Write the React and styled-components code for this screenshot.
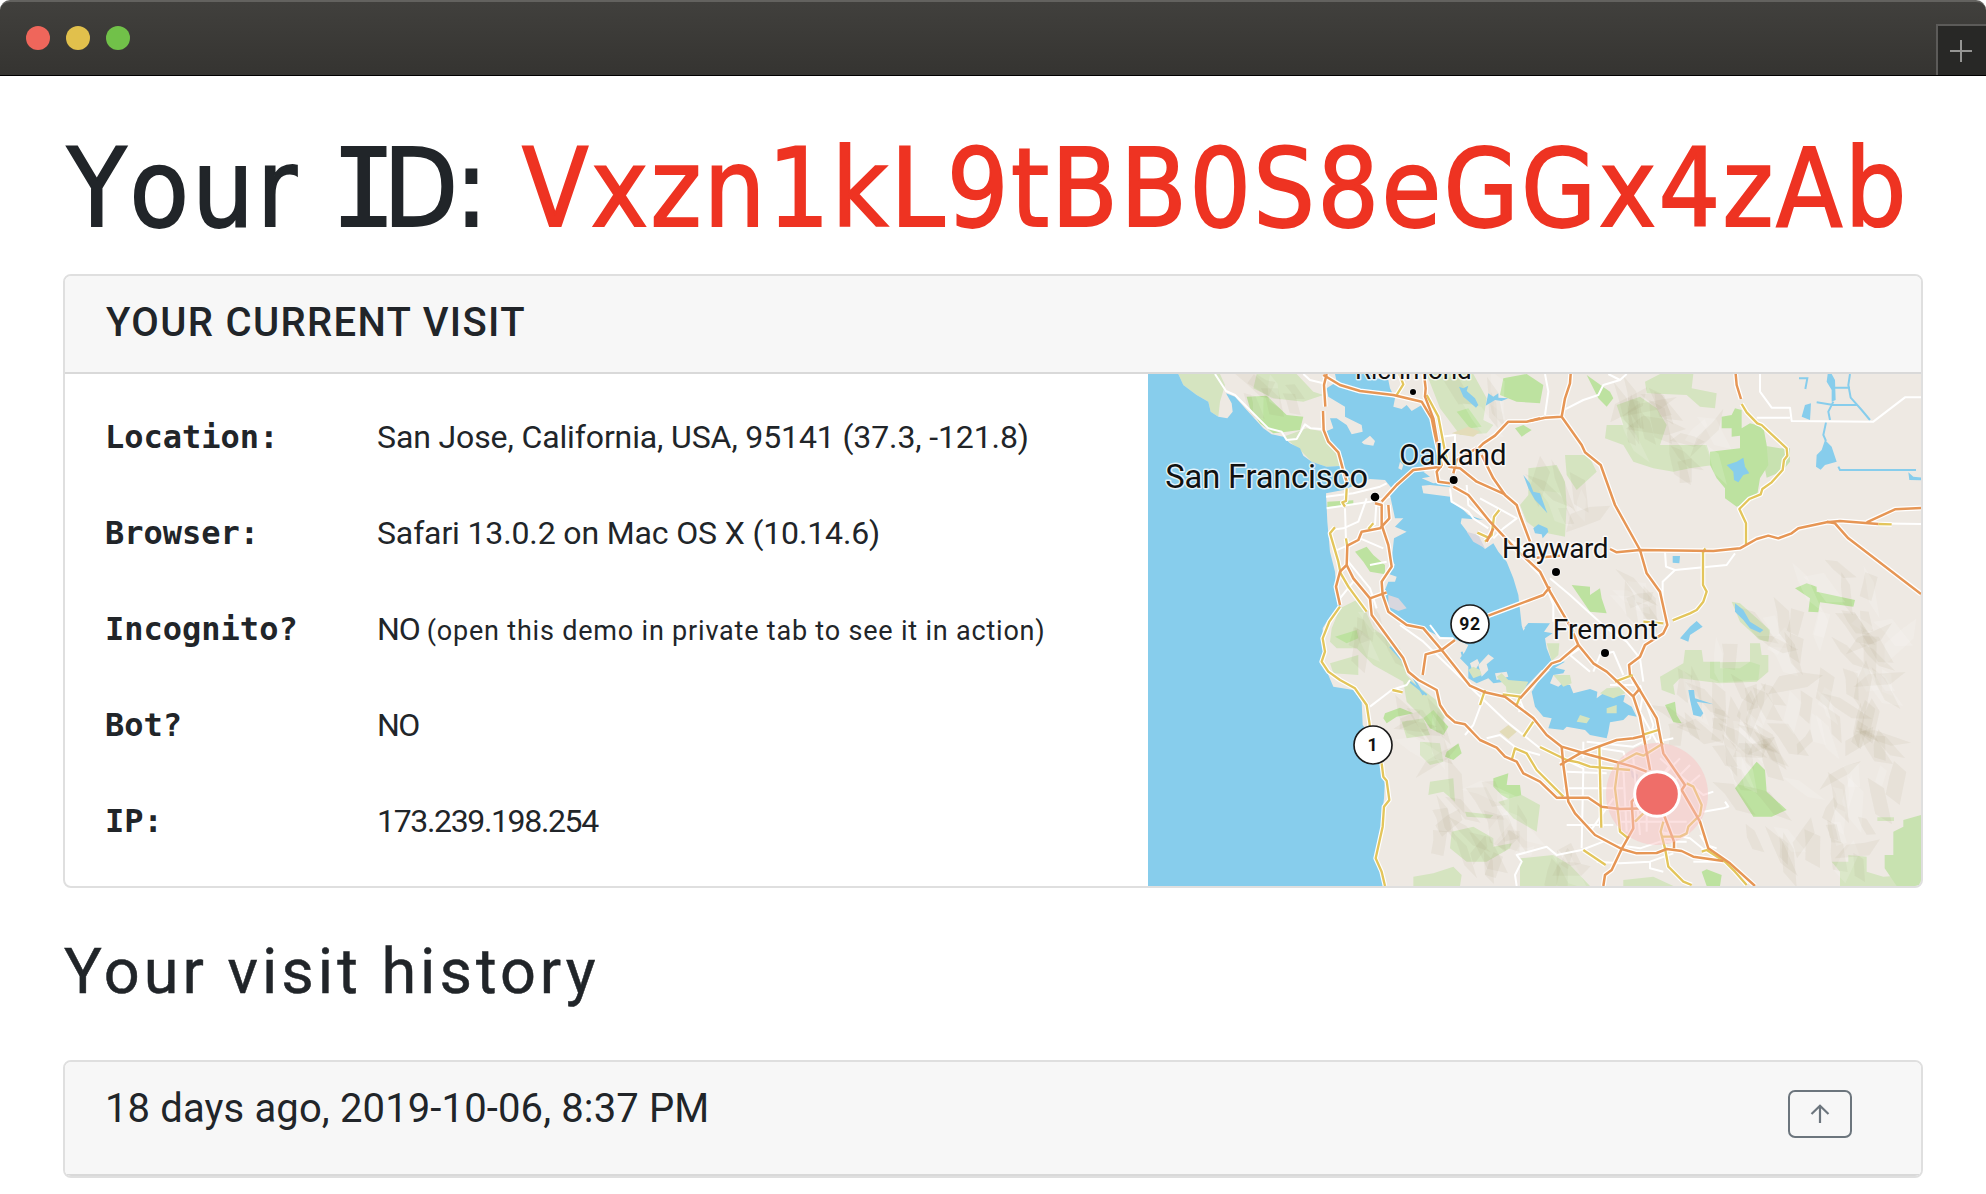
import React from "react";
import styled, { createGlobalStyle } from "styled-components";

const GlobalStyle = createGlobalStyle`
  * { box-sizing: border-box; }
  body {
    margin: 0;
    background: #fff;
    color: #212529;
    font-family: Roboto, "Noto Sans", sans-serif;
  }
`;

const Window = styled.div`
  width: 1986px;
  height: 1194px;
  overflow: hidden;
  background: #fff;
`;

const TitleBar = styled.header`
  display: flex;
  align-items: center;
  justify-content: space-between;
  height: 76px;
  padding-left: 26px;
  border-top: 2px solid #63625f;
  border-bottom: 1px solid #000;
  border-radius: 10px 10px 0 0;
  background: linear-gradient(#41403d, #353431);
  overflow: hidden;
`;

const Lights = styled.div`
  display: flex;
  gap: 16px;
  padding-bottom: 1px;
`;

const Light = styled.span`
  width: 24px;
  height: 24px;
  border-radius: 50%;
  background: ${(p) => p.$color};
`;

const NewTab = styled.button`
  display: flex;
  align-items: center;
  justify-content: center;
  align-self: flex-end;
  width: 50px;
  height: 51px;
  padding: 0 2px 0 0;
  border: solid #5c5b59;
  border-width: 2px 0 0 2px;
  background: #282826;
`;

const Page = styled.main`
  padding: 46px 63px 0;
`;

const Title = styled.h1`
  margin: 0 0 20px;
  height: 132px;
  line-height: 134px;
  font-family: "DejaVu Sans Condensed", "DejaVu Sans", sans-serif;
  font-stretch: condensed;
  font-size: 108px;
  font-weight: 400;
  font-kerning: none;
  white-space: nowrap;
  display: flex;
  -webkit-text-stroke: 1.8px currentColor;
`;

const TitleLabel = styled.span`
  width: 459px;
  padding-left: 4px;
  letter-spacing: 3.2px;
`;

const SlabCapital = styled.span`
  font-family: "DejaVu Sans Mono", monospace;
  letter-spacing: -13px;
  margin-left: -3px;
`;

const TightCapital = styled.span`
  letter-spacing: -3px;
`;

const VisitorId = styled.span`
  color: #ee3322;
  letter-spacing: 2.3px;
`;

const Card = styled.section`
  border: 2px solid #dfdfdf;
  border-radius: 8px;
  background: #fff;
  overflow: hidden;
`;

const CardHeader = styled.div`
  display: flex;
  justify-content: space-between;
  height: ${(p) => p.$height}px;
  padding: 0 69px 0 41px;
  border-bottom: 2px solid #d9d9d9;
  background: #f7f7f7;
`;

const CardTitle = styled.h2`
  margin: 0;
  line-height: 93px;
  font-size: 40px;
  font-weight: 500;
  letter-spacing: 1.35px;
`;

const CardBody = styled.div`
  display: flex;
  height: 512px;
`;

const Details = styled.dl`
  flex: 1;
  margin: 0;
  padding: 15px 0 0 40px;
`;

const Row = styled.div`
  display: flex;
  height: 96px;
  line-height: 96px;
  font-size: 32px;
  white-space: nowrap;
`;

const Label = styled.dt`
  width: 272px;
  font-family: "DejaVu Sans Mono", monospace;
  font-weight: 700;
`;

const Value = styled.dd`
  margin: 0;
  letter-spacing: ${(p) => p.$spacing || 0}px;
`;

const Note = styled.small`
  font-size: 27px;
  letter-spacing: 0.8px;
`;

const MapFrame = styled.div`
  width: 773px;
  height: 512px;

  svg {
    display: block;
  }
`;

const HistoryTitle = styled.h2`
  margin: 44px 0 48px;
  height: 80px;
  line-height: 80px;
  padding-left: 1px;
  font-size: 63px;
  font-weight: 400;
  letter-spacing: 4px;
  -webkit-text-stroke: 0.5px currentColor;
`;

const VisitTime = styled.span`
  margin-left: -1px;
  line-height: 94px;
  font-size: 40px;
  letter-spacing: 0.13px;
`;

const CollapseButton = styled.button`
  display: flex;
  align-items: center;
  justify-content: center;
  width: 64px;
  height: 48px;
  margin-top: 28px;
  padding: 0;
  border: 2px solid #6c757d;
  border-radius: 7px;
  background: transparent;
`;

const VISIT = [
  { label: "Location:", value: "San Jose, California, USA, 95141 (37.3, -121.8)", spacing: -0.12 },
  { label: "Browser:", value: "Safari 13.0.2 on Mac OS X (10.14.6)", spacing: -0.14 },
  { label: "Incognito?", value: "NO", note: "(open this demo in private tab to see it in action)", spacing: -1 },
  { label: "Bot?", value: "NO", spacing: -1.5 },
  { label: "IP:", value: "173.239.198.254", spacing: -1.35 },
];

/* ---- map geometry, three units to a pixel ---- */

const WATER =
  "M24 27L115 27 130 60 170 90 205 110 212 140 235 155 262 160 278 140 275 115 258 85 285 95 320 135 370 190 395 208 430 215 450 235 480 250 490 272 515 290 560 305 612 302 610 285 600 262 575 235 555 200 580 190 570 160 590 160 620 180 635 208 668 200 665 180 615 155 615 125 590 110 565 95 560 70 590 50 585 27 690 27 705 40 745 45 750 70 765 100 760 125 785 132 800 120 815 138 845 120 860 130 880 165 890 200 890 240 900 270 905 300 850 320 870 335 845 340 880 355 925 352 930 366 870 360 845 362 850 385 890 390 930 395 932 412 960 425 985 450 1030 465 965 460 962 475 985 505 1015 530 1035 552 1060 535 1075 560 1100 590 1120 640 1135 690 1145 780 1150 792 1165 774 1230 775 1212 800 1238 805 1215 820 1220 850 1235 888 1275 890 1245 908 1275 915 1270 925 1240 930 1230 955 1255 965 1265 957 1290 960 1300 985 1350 972 1372 980 1370 1000 1390 985 1420 975 1415 992 1455 990 1450 1010 1475 1025 1490 1055 1465 1050 1450 1065 1410 1072 1405 1100 1400 1120 1350 1110 1335 1095 1280 1085 1270 1095 1225 1090 1235 1060 1210 1055 1185 1025 1175 980 1195 950 1230 915 1205 915 1155 968 1115 965 1095 950 1060 955 1045 940 1010 955 985 940 985 905 960 880 975 860 985 840 940 820 900 815 870 800 800 775 770 760 745 735 725 700 745 650 765 650 770 635 740 625 765 600 755 585 762 520 800 500 765 485 790 460 765 460 750 390 755 370 735 345 690 342 610 375 558 385 562 470 570 560 585 620 590 680 600 725 560 770 548 790 550 860 543 890 565 930 580 965 640 975 665 1010 668 1080 690 1110 720 1200 735 1240 732 1300 725 1360 720 1420 705 1480 720 1520 730 1563 24 1563Z";

const LAKES = [
  "957 65L970 70 985 62 980 78 1005 100 1015 120 1008 128 985 108 970 95Z",
  "1037 122L1045 85 1060 95 1075 85 1075 98 1105 100 1085 108 1065 105Z",
  "1150 330L1170 355 1180 380 1200 385 1222 445 1200 420 1185 405 1165 370Z",
  "1180 490L1195 478 1222 490 1225 500 1208 520 1205 508 1185 505Z",
  "590 300L620 290 640 278 645 305 658 325 640 330 625 352 612 345 610 320Z",
  "885 225L905 245 920 290 885 300 872 314 858 305 860 270 875 255Z",
  "893 27L905 27 915 45 917 105 905 110 905 75 890 50Z",
  "815 155L825 120 843 115 840 165Z",
  "428 573L450 573 448 595 428 593Z",
  "615 715L640 735 660 770 700 795 690 803 660 790 640 765 615 740Z",
  "450 820L480 785 500 768 518 785 480 810 475 830Z",
  "475 975L492 975 495 1000 550 1018 500 1010 520 1045 512 1055 490 1050 480 1005Z",
  "1135 322L1150 335 1175 338 1173 346 1138 345Z",
];
const LAKE_EAST = [false, false, false, false, true, true, true, true, true, true, true, true, true];

const CREEKS = [
  "M1977 40H2002L1996 72M2130 27L2125 60 2132 98 2165 135 2190 165M2075 68H2130M2030 112L2080 120H2150M2080 110L2065 140 2070 165M2058 172L2050 210 2058 228M2095 305L2100 315H2328",
  "M750 845L790 890 815 930 850 990M810 950L860 990M970 880L965 860",
];

const SHOALS = [
  "990 895L1012 882 1018 895 1000 925Z",
  "1015 900L1045 868 1062 880 1040 898 1045 915 1025 935Z",
  "1065 925L1100 920 1105 935 1070 945Z",
];

const MARSH = [
  "985 915L1000 905 1020 915 1025 930 1000 940Z",
  "1070 935L1085 925 1105 945 1165 950 1150 980 1125 1000 1100 985 1098 965Z",
  "1220 835L1258 835 1255 870 1235 888Z",
  "1240 930L1290 930 1295 955 1270 965Z",
  "1400 1030L1430 1020 1430 1045 1400 1045Z",
  "1320 1050L1350 1060 1340 1075 1310 1070Z",
  "1380 985L1400 970 1450 965 1455 985 1420 1000Z",
];

const PARKS = [
  { c: 0, d: "115 27L240 27 255 60 240 110 235 155 212 140 205 110 170 90 130 60Z" },
  { c: 0, d: "350 27L470 27 520 80 550 90 490 110 400 100 340 70Z" },
  { c: 1, d: "320 95L380 92 440 150 490 155 480 195 440 200 400 205 360 175 330 130Z" },
  { c: 0, d: "430 215L500 190 550 200 580 235 605 265 612 302 560 305 515 290 480 255Z" },
  { c: 0, d: "860 27L1000 27 1040 100 1030 165 1060 180 1040 205 960 210 900 130Z" },
  { c: 1, d: "950 140L985 130 1025 185 990 190Z" },
  { c: 1, d: "1090 40L1160 27 1210 60 1200 115 1130 110 1080 90Z" },
  { c: 1, d: "1125 190L1150 180 1175 195 1145 215Z" },
  { c: 2, d: "935 205L985 185 1020 200 1000 215Z" },
  { c: 1, d: "562 410L640 406 640 420 562 426Z" },
  { c: 1, d: "645 560L680 545 700 570 735 600 735 628 690 620 670 590Z" },
  { c: 0, d: "600 730L660 700 700 790 780 850 800 930 830 960 895 1010 920 1050 890 1090 850 1060 800 1010 790 950 700 900 650 850 590 850 570 830 575 790Z" },
  { c: 1, d: "585 815L650 795 655 820 620 835Z" },
  { c: 0, d: "570 895L655 870 655 930 580 925Z" },
  { c: 1, d: "735 1045L780 1028 820 1045 770 1055 740 1075 730 1060Z" },
  { c: 1, d: "850 1060L880 1035 925 1085 910 1110 870 1090Z" },
  { c: 0, d: "785 1070L850 1060 870 1110 800 1120Z" },
  { c: 0, d: "840 1130L900 1135 910 1190 870 1200 840 1170Z" },
  { c: 1, d: "920 1160L955 1135 965 1165 940 1185 915 1175Z" },
  { c: 0, d: "870 1250L940 1240 945 1310 910 1280 865 1290Z" },
  { c: 1, d: "1060 1240L1105 1225 1100 1260 1140 1260 1145 1300 1120 1310 1085 1290 1060 1265Z" },
  { c: 0, d: "1075 1310L1145 1290 1200 1320 1190 1400 1120 1360Z" },
  { c: 0, d: "935 1400L1000 1385 1060 1420 1060 1445 1115 1435 1110 1450 1040 1490 980 1490 930 1450Z" },
  { c: 0, d: "820 1535L880 1525 940 1505 965 1530 960 1563 820 1563Z" },
  { c: 0, d: "1140 1480L1240 1470 1290 1500 1350 1563 1140 1563Z" },
  { c: 0, d: "975 1340L1060 1350 1050 1360 980 1355Z" },
  { c: 0, d: "1165 310L1250 300 1275 350 1280 420 1275 515 1200 500 1160 470 1140 420 1165 390Z" },
  { c: 0, d: "1275 270L1345 270 1370 320 1310 375 1280 330Z" },
  { c: 1, d: "1340 30L1410 80 1420 100 1400 125 1375 100Z" },
  { c: 0, d: "1515 50L1560 27 1660 27 1655 70 1730 85 1725 130 1680 125 1640 90 1520 85Z" },
  { c: 0, d: "1430 120L1500 95 1550 130 1580 180 1560 240 1700 240 1720 300 1650 310 1600 320 1540 310 1480 290 1450 240 1395 220 1400 180 1450 180Z" },
  { c: 3, d: "1860 240L1920 250 1950 250 1950 290 1925 320 1880 338Z" },
  { c: 1, d: "1745 155L1775 150 1785 130 1805 135 1805 190 1830 175 1870 185 1880 240 1885 300 1860 340 1850 400 1790 425 1755 400 1755 370 1730 340 1710 300 1710 260 1800 250 1800 212 1775 215 1775 190 1745 190Z" },
  { c: 1, d: "1295 660L1350 665 1350 690 1380 670 1385 700 1400 745 1350 740Z" },
  { c: 1, d: "1965 670L2000 655 2030 665 2030 680 2145 705 2140 725 2040 712 2035 742 2005 740 2010 700Z" },
  { c: 0, d: "1775 710L1800 715 1890 795 1885 830 1860 825 1800 770Z" },
  { c: 0, d: "1560 935L1630 895 1635 855 1685 855 1690 890 1710 890 1710 918 1740 915 1740 892 1830 890 1830 835 1860 835 1865 870 1885 870 1885 920 1850 950 1740 955 1620 940 1600 960 1605 990 1565 975Z" },
  { c: 3, d: "1710 890L1740 890 1740 910 1800 910 1830 890 1860 900 1855 945 1740 952 1710 940Z" },
  { c: 1, d: "1575 1020L1605 1010 1610 1050 1625 1075 1600 1072Z" },
  { c: 1, d: "1785 1270L1850 1190 1875 1215 1880 1280 1940 1335 1895 1355 1840 1355Z" },
  { c: 1, d: "1685 1520L1700 1513 1745 1530 1740 1563 1700 1563Z" },
  { c: 0, d: "2075 1490L2125 1490 2125 1470 2180 1475 2180 1520 2230 1535 2300 1530 2300 1563 2100 1563 2100 1520Z" },
  { c: 3, d: "2234 1470L2260 1470 2260 1400 2290 1385 2290 1365 2343 1350 2343 1563 2270 1563 2234 1510Z" },
  { c: 0, d: "2212 1357H2262V1368H2212Z" },
  { c: 0, d: "1450 1545L1540 1535 1600 1563 1450 1563Z" },
];
const PARK_FILL = ["#d5e4c0", "#bde2a0", "#e3dcb9", "#c8e2b0"];

const MINOR = [
  "225 27 258 78 285 90 385 190 425 200 440 225 470 222 495 178 512 190 545 192",
  "490 27 510 45 550 55",
  "558 395 640 385 720 365 740 355",
  "560 430 690 410 750 395",
  "615 430 618 530",
  "680 400 655 470 610 490 570 495",
  "710 400 705 480",
  "580 560 615 545 660 520 730 550",
  "625 590 690 670 710 730",
  "640 650 600 700",
  "690 600 740 590",
  "905 215 945 210 945 240",
  "980 360 985 420 1060 480 1100 520 1170 560",
  "930 370 935 410 985 440 1000 460 1045 490",
  "1020 400 1130 460 1090 490 1060 520",
  "1230 640 1290 690 1350 745 1400 790",
  "1170 600 1210 640 1240 720 1240 770",
  "1215 27 1225 80 1215 150",
  "1275 133 1330 105 1375 90 1390 60 1440 45 1460 27",
  "1405 27 1440 45",
  "1860 27 1860 80 1895 128 1950 128 1955 168 2200 170 2295 97 2343 97",
  "1850 158 1950 158",
  "2190 475 2343 477",
  "1575 560 1578 605 1605 615 1760 600 1785 565",
  "1605 615 1568 650 1568 700",
  "780 780 850 830 1010 985 1100 1070 1200 1150",
  "690 1025 755 975 800 960 810 945",
  "1030 1000 1000 1080 975 1110",
  "1040 1120 1080 1110 1130 1150 1200 1170",
  "870 780 900 820 940 820",
  "1140 1005 1150 1030 1135 1040",
  "1320 850 1290 870 1350 920",
  "1400 790 1460 830 1500 880 1510 950",
  "1360 920 1380 870 1420 860 1450 930",
  "1470 920 1480 960 1410 960",
  "1500 960 1540 1080 1530 1120 1480 1145 1340 1130",
  "1510 980 1500 1040 1550 1130 1600 1120",
  "1200 1150 1330 1210 1325 1450",
  "1270 1270 1450 1270",
  "1280 1220 1400 1225",
  "1330 1130 1330 1180",
  "1280 1380 1420 1380",
  "1380 1150 1450 1160 1460 1190",
  "1420 1300 1350 1400",
  "1450 1210 1460 1400",
  "1480 1180 1500 1410",
  "1520 1400 1520 1260",
  "1430 1330 1600 1330",
  "1440 1370 1640 1370",
  "1560 1180 1690 1290 1720 1280",
  "1590 1200 1560 1240",
  "1620 1180 1570 1230",
  "1650 1200 1600 1250",
  "1680 1230 1620 1280",
  "1690 1340 1750 1330 1765 1325 1755 1310",
  "1560 1400 1650 1420 1700 1460",
  "1430 1440 1500 1450 1560 1430 1640 1430",
  "1370 1490 1440 1495 1530 1490 1600 1465",
  "1530 1490 1530 1510 1570 1520",
  "1680 1410 1700 1440 1730 1450",
  "1130 1563 1125 1530 1145 1490 1130 1470 1220 1445 1250 1470 1325 1455 1390 1430",
  "1660 1490 1750 1490",
];

const ORANGE = [
  "560 27 552 60 556 125",
  "549 138 551 195 565 230 595 262 608 310 620 350",
  "550 30 600 60 660 78 760 90 845 110 875 160 885 210 905 300 890 320 895 350 930 355",
  "852 27 857 70 855 95 880 160 892 230",
  "1200 160 1160 170 1105 170 1065 212 1030 235 1015 250",
  "1215 158 1265 155 1275 100 1290 55 1292 27",
  "1170 168 1215 158",
  "1265 155 1325 240 1335 262 1382 300 1425 420 1500 555 1520 625 1560 680 1582 780 1570 805 1515 840 1500 875 1467 900 1470 930",
  "725 410 770 360 820 315 905 305",
  "925 305 960 310 1010 350 1095 388",
  "1025 270 1060 340 1095 390 1130 420 1140 450 1170 530",
  "940 365 985 390 1050 470 1130 555 1200 620 1230 680 1300 800",
  "940 325 950 285 1010 250",
  "1040 530 1060 490",
  "705 415 725 420 725 480 745 540 755 605 725 650 728 690 745 740 800 780 850 790 905 855 990 962 1035 982 1095 995 1180 1060 1220 1110 1265 1145 1350 1170 1480 1205 1520 1220",
  "745 420 748 460 720 490 665 500 655 525 622 542 620 600 600 620 588 665 600 720",
  "620 600 640 640 690 700 695 750 735 805 790 880 805 920 835 945 890 975 900 1020 920 1050 945 1072 975 1078 1020 1125 1070 1148 1095 1175 1130 1190 1150 1225 1200 1250 1250 1298 1345 1298 1385 1325 1440 1332 1520 1330",
  "690 700 740 682",
  "1045 752 1170 705 1210 690 1230 665",
  "945 825 905 855 857 868 848 930",
  "1140 1000 1235 895 1260 887 1315 840 1360 895 1400 920 1480 995 1500 1055 1530 1215",
  "1315 840 1300 805",
  "1475 935 1550 1060 1570 1165 1635 1260 1625 1275 1680 1370 1705 1450 1770 1495 1845 1563",
  "1480 993 1500 970",
  "1260 1200 1320 1165 1430 1125 1480 1120 1512 1112",
  "1265 1145 1270 1200 1285 1310 1305 1345 1365 1410 1445 1452 1490 1465 1550 1464 1580 1452 1625 1458 1660 1475 1750 1488",
  "1390 1563 1395 1530 1415 1515 1445 1452 1480 1390 1475 1310 1520 1260",
  "1572 1350 1602 1430 1602 1450",
  "1410 552 1430 562 1500 555 1720 558 1800 550 1850 522 1885 512 1915 520 1955 505 1975 490 2060 472 2100 468 2215 477",
  "2180 472 2265 433 2343 429",
  "2060 470 2085 475 2125 520 2343 687",
  "1787 27 1790 60 1803 102",
  "1190 578 1260 572",
];

const YELLOW = [
  "770 90 790 58 778 27",
  "860 90 895 155 915 260 925 300",
  "620 370 618 408 607 412 615 425",
  "618 520 622 545",
  "585 487 570 505 595 590 602 625 625 665 680 740",
  "600 725 568 770 560 790 548 820 555 860 545 890 565 920 600 945 645 970 680 1020 690 1085",
  "725 1195 730 1235 740 1247 748 1305 732 1325 728 1385 707 1480 725 1520 735 1563",
  "700 475 685 492",
  "1078 435 1062 455 1055 510 1035 530",
  "1012 503 1045 518",
  "1805 117 1820 142 1852 175 1865 180 1940 250 1942 272 1932 285 1928 315 1895 352 1867 372 1862 388 1828 402 1798 432 1818 475 1818 538",
  "1696 550 1689 562 1689 660 1700 680 1690 710 1670 735 1650 745 1598 766",
  "1510 770 1570 775",
  "2215 477 2255 478",
  "757 975 788 982",
  "1035 975 1020 1020",
  "1088 988 1140 995 1128 1025",
  "1180 1070 1150 1115",
  "1115 1185 1125 1150 1160 1165 1190 1215 1270 1295",
  "1200 1146 1280 1185 1315 1192 1350 1205 1470 1215",
  "1378 1145 1384 1388",
  "1330 1455 1397 1500",
  "1425 950 1478 930",
  "1512 1108 1555 1095",
  "1570 1135 1510 1172 1490 1165 1435 1195 1425 1270 1435 1350 1440 1400 1465 1420",
  "1640 1255 1660 1265 1685 1320 1680 1350 1645 1385 1640 1405 1620 1415 1565 1415",
  "1570 1370 1562 1400 1575 1450 1585 1505 1630 1550 1655 1560",
  "1485 1370 1510 1345",
  "1685 1460 1700 1455 1755 1490 1785 1520 1820 1560",
];

const AIRPORTS = [
  "980 500L1015 510 1035 550 1000 530Z",
  "745 690L775 700 800 730 775 738 745 725Z",
  "1472 1215L1495 1230 1490 1250 1475 1235Z",
];

/* hill shading: each entry is [x, y, width, height, number of facets] */
const HILLS = [
  [340, 50, 130, 100, 8],
  [900, 60, 180, 120, 6],
  [1190, 310, 160, 180, 8],
  [1450, 110, 140, 130, 14],
  [1600, 200, 140, 150, 8],
  [1440, 660, 90, 100, 8],
  [1980, 600, 240, 120, 6],
  [1700, 770, 580, 140, 24],
  [1600, 940, 640, 200, 50],
  [1720, 1120, 560, 220, 30],
  [1800, 1350, 380, 170, 16],
  [640, 750, 130, 120, 8],
  [800, 1030, 120, 160, 10],
  [880, 1220, 280, 290, 24],
  [1150, 1470, 150, 80, 6],
];

function makeFacets() {
  let seed = 97;
  const rnd = () => {
    seed = (seed * 16807) % 2147483647;
    return seed / 2147483647;
  };
  const out = [];
  HILLS.forEach(([x, y, w, h, n]) => {
    for (let i = 0; i < n; i++) {
      const cx = x + rnd() * w;
      const cy = y + rnd() * h;
      const len = 30 + rnd() * 60;
      const wide = 18 + rnd() * 26;
      const a = rnd() < 0.7 ? 0.4 + rnd() * 0.9 : rnd() * 3.1;
      const ux = Math.cos(a);
      const uy = Math.sin(a);
      const pts = [
        [-len, -wide * rnd()],
        [-len * 0.3, -wide],
        [len * 0.4, -wide * 0.3],
        [len, wide * 0.3],
        [len * 0.3, wide * 0.9],
        [-len * 0.4, wide * 0.2],
      ].map(([p, q]) => `${(cx + p * ux - q * uy).toFixed(0)},${(cy + p * uy + q * ux).toFixed(0)}`);
      out.push({ pts: pts.join(" "), light: rnd() < 0.3 });
    }
  });
  return out;
}
const FACETS = makeFacets();

const CITIES = [
  { name: "Richmond", x: 645, y: 42, w: 350, size: 78, dot: [819, 81, 9] },
  { name: "San Francisco", x: 76, y: 370, w: 608, size: 98, dot: [705, 396, 13] },
  { name: "Oakland", x: 778, y: 301, w: 322, size: 88, dot: [941, 345, 12] },
  { name: "Hayward", x: 1086, y: 580, w: 320, size: 84, dot: [1248, 621, 12] },
  { name: "Fremont", x: 1238, y: 822, w: 316, size: 84, dot: [1395, 864, 12] },
];

const SHIELDS = [
  { label: "92", x: 990, y: 777 },
  { label: "1", x: 699, y: 1140 },
];

function Lines({ list, color, width }) {
  return (
    <g fill="none" stroke={color} strokeWidth={width} strokeLinejoin="round">
      {list.map((points) => (
        <polyline key={points} points={points} />
      ))}
    </g>
  );
}

function BayMap() {
  return (
    <svg width="773" height="512" viewBox="24 27 2319 1536">
      <rect x="24" y="27" width="2319" height="1536" fill="#eee9e3" />
      {PARKS.map((park) => (
        <path key={park.d} d={`M${park.d}`} fill={PARK_FILL[park.c]} />
      ))}
      {FACETS.map((f, i) => (
        <polygon key={i} points={f.pts} fill={f.light ? "#fff" : "#8a7c50"} opacity={f.light ? 0.14 : 0.065} />
      ))}
      <path d={WATER} fill="#87cdec" />
      <path d="M665 232L690 212 705 228 700 242 672 238ZM780 290L790 300 785 315 775 310ZM1145 780L1155 790 1150 797Z" fill="#eee9e3" />
      {LAKES.map((d, i) => (
        <path key={d} d={`M${d}`} fill="#87cdec" transform={LAKE_EAST[i] ? "translate(1170 0)" : undefined} />
      ))}
      {CREEKS.map((d) => (
        <path key={d} d={d} fill="none" stroke="#87cdec" strokeWidth="6" />
      ))}
      {SHOALS.map((d) => (
        <path key={d} d={`M${d}`} fill="#eee9e3" />
      ))}
      {MARSH.map((d) => (
        <path key={d} d={`M${d}`} fill="#d5e4c0" />
      ))}
      {AIRPORTS.map((d) => (
        <path key={d} d={`M${d}`} fill="#d8d7de" />
      ))}
      <path d="M1078 1100L1105 1080 1130 1100 1105 1122Z" fill="#e3dcb9" />
      <Lines list={MINOR} color="#fff" width={6} />
      <Lines list={YELLOW} color="#fff" width={14} />
      <Lines list={ORANGE} color="#fff" width={15} />
      <Lines list={YELLOW} color="#e3c55b" width={7} />
      <Lines list={ORANGE} color="#e69655" width={7.5} />

      <circle cx="1551" cy="1287" r="153" fill="#f9c4c4" opacity="0.5" />
      <circle cx="1551" cy="1287" r="67" fill="#ef6e69" stroke="#fff" strokeWidth="9" />

      {CITIES.map((c) => (
        <g key={c.name}>
          <text
            x={c.x}
            y={c.y}
            fontFamily="Roboto, sans-serif"
            fontSize={c.size}
            textLength={c.w}
            fill="#111"
            stroke="#fff"
            strokeOpacity="0.75"
            strokeWidth="9"
            strokeLinejoin="round"
            paintOrder="stroke"
          >
            {c.name}
          </text>
          <circle cx={c.dot[0]} cy={c.dot[1]} r={c.dot[2]} stroke="#fff" strokeOpacity="0.6" strokeWidth="5" paintOrder="stroke" />
        </g>
      ))}
      {SHIELDS.map((s) => (
        <g key={s.label}>
          <circle cx={s.x} cy={s.y} r="57" fill="#fff" stroke="#1c1c1c" strokeWidth="5" />
          <text x={s.x} y={s.y + 19} textAnchor="middle" fontFamily="Roboto, sans-serif" fontWeight="700" fontSize="53" letterSpacing="2" fill="#111">
            {s.label}
          </text>
        </g>
      ))}
    </svg>
  );
}

export default function App() {
  return (
    <Window>
      <GlobalStyle />
      <TitleBar>
        <Lights>
          <Light $color="#ef665b" />
          <Light $color="#e1c04c" />
          <Light $color="#71c149" />
        </Lights>
        <NewTab aria-label="New tab">
          <svg width="22" height="22" viewBox="0 0 22 22" stroke="#969694" strokeWidth="2">
            <path d="M11 0V22M0 11H22" />
          </svg>
        </NewTab>
      </TitleBar>
      <Page>
        <Title>
          <TitleLabel>
            Your <SlabCapital>I</SlabCapital>
            <TightCapital>D</TightCapital>:
          </TitleLabel>
          <VisitorId>Vxzn1kL9tBB0S8eGGx4zAb</VisitorId>
        </Title>
        <Card>
          <CardHeader $height={98}>
            <CardTitle>YOUR CURRENT VISIT</CardTitle>
          </CardHeader>
          <CardBody>
            <Details>
              {VISIT.map((row) => (
                <Row key={row.label}>
                  <Label>{row.label}</Label>
                  <Value $spacing={row.spacing}>
                    {row.value}
                    {row.note && <> <Note>{row.note}</Note></>}
                  </Value>
                </Row>
              ))}
            </Details>
            <MapFrame>
              <BayMap />
            </MapFrame>
          </CardBody>
        </Card>
        <HistoryTitle>Your visit history</HistoryTitle>
        <Card>
          <CardHeader $height={114}>
            <VisitTime>18 days ago, 2019-10-06, 8:37 PM</VisitTime>
            <CollapseButton aria-label="Collapse">
              <svg width="20" height="20" viewBox="0 0 20 20" fill="none" stroke="#6c757d" strokeWidth="2.2">
                <path d="M10 19V2M1.5 10L10 1.8 18.500 10" />
              </svg>
            </CollapseButton>
          </CardHeader>
        </Card>
      </Page>
    </Window>
  );
}
